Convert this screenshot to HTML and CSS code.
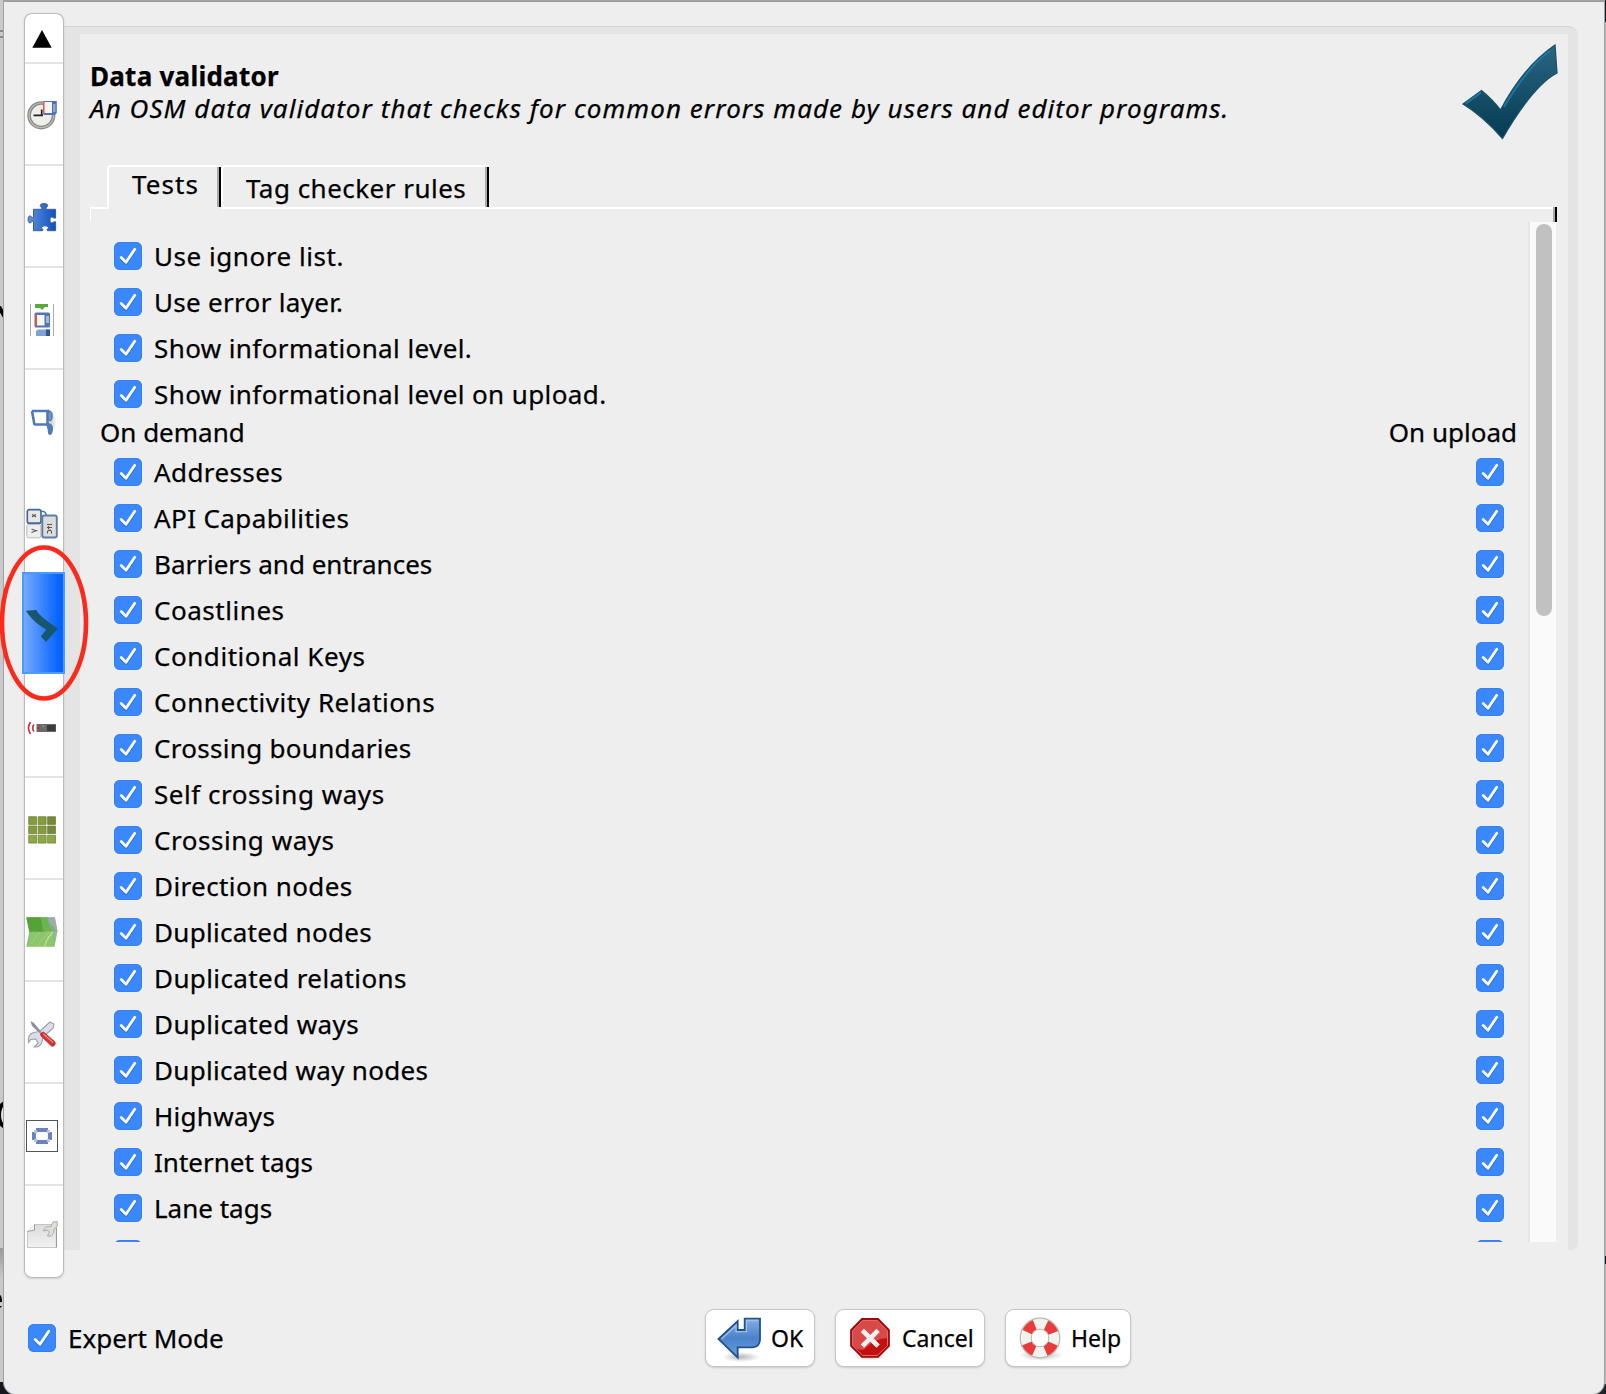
FILE: index.html
```html
<!DOCTYPE html>
<html lang="en">
<head>
<meta charset="utf-8">
<title>Preferences</title>
<link rel="stylesheet" href="styles.css">
</head>
<body>
<svg width="0" height="0" class="defs">
  <defs>
    <linearGradient id="bigcheck" x1="0" y1="0" x2="0" y2="1"><stop offset="0" stop-color="#2b6583"/><stop offset="1" stop-color="#043b52"/></linearGradient>
    <linearGradient id="blue" x1="0" y1="0" x2="1" y2="0"><stop offset="0" stop-color="#5c92de"/><stop offset="1" stop-color="#0e50bd"/></linearGradient>
    <linearGradient id="arrow" x1="0" y1="0" x2="0" y2="1"><stop offset="0" stop-color="#84aee0"/><stop offset=".5" stop-color="#4a83cb"/><stop offset="1" stop-color="#6c9fdb"/></linearGradient>
    <linearGradient id="paper" x1="0" y1="0" x2="0" y2="1"><stop offset="0" stop-color="#dcdcdc"/><stop offset="1" stop-color="#f1f1f1"/></linearGradient>
    <radialGradient id="shade"><stop offset="0" stop-color="#000" stop-opacity=".28"/><stop offset="1" stop-color="#000" stop-opacity="0"/></radialGradient>
    <symbol id="tick" viewBox="0 0 28 28"><path d="M7.2 15.9 12 20.6 20.8 7.6" fill="none" stroke="#1b62cc" stroke-opacity=".55" stroke-width="2.8" stroke-linecap="round" stroke-linejoin="round" transform="translate(0 1)"/><path d="M7.2 15.6 12 20.3 20.8 7.3" fill="none" stroke="#fff" stroke-width="2.8" stroke-linecap="round" stroke-linejoin="round"/></symbol>
  </defs>
</svg>
<div class="desktop">
  <div class="behind behind-left">
    <svg class="stroke" width="4" height="14" viewBox="0 0 4 14"><path d="M-2-1 6 13" stroke="#000" stroke-width="4"/></svg>
    <i class="rule r1"></i><i class="rule r2"></i><i class="lower"></i>
    <svg class="stroke curve" width="4" height="30" viewBox="0 0 4 30"><path d="M8 2.500Q-1 3-1 15T8 27" fill="#ddd" stroke="#000" stroke-width="4"/></svg>
    <svg class="stroke dots" width="3" height="16" viewBox="0 0 3 16"><path d="M0 1Q2 2 2 8H0zM0 12h2l-2 2z"/></svg>
  </div>
  <div class="behind behind-right"></div>
  <main class="window">
    <div class="upper">
      <nav class="sidebar">
        <div class="scroll-up"><svg width="20" height="18" viewBox="0 0 20 18"><path d="M10 0 19.7 17.7H.3z"/></svg></div>
        <div class="item"><svg viewBox="0 0 32 32"><circle cx="15.3" cy="15.3" r="12.3" fill="#eeeeea" stroke="#8a8a86" stroke-width="3.6"/><circle cx="15.3" cy="15.3" r="12.3" fill="none" stroke="#bcbcb8" stroke-width="1.2"/><path d="M7.5 15.3H17M15.7 9.5v6" stroke="#222" stroke-width="1.7"/><path d="M17.5 1h13.3v12l-2 2H17.5z" fill="#4b73ba"/><path d="M18 2h8v11h-8z" fill="#f6f6f8"/><path d="M17.8 2v12" stroke="#ef5a4a" stroke-width="1.6"/><path d="M27 4h2.5v8H27z" fill="#91a6cc"/></svg></div>
        <div class="item"><svg viewBox="0 0 32 32"><path d="M7.5 7.3h8.2c1-2-1.7-2.200-1.500-4 .2-2.300 7.300-2.300 7.500 0 .2 1.800-2.500 2-1.500 4h9.400v8.700c-2 .8-2.800-1.500-4.300-1-1.800.8-1.800 5 0 5.800 1.500.6 2.300-1.800 4.300-1v8.900h-8.200c-1.300-2 1.500-2 1-3.500-.8-1.800-6-1.800-6.800 0-.5 1.500 2.300 1.500 1 3.500H7.500v-9.300c-2-.6-2 1.700-3.700 1.500-2.300-.2-2.300-6.800 0-7 1.700-.2 1.700 2.200 3.700 1.500z" fill="url(#blue)" stroke="#3d5f96" stroke-width="1"/></svg></div>
        <div class="item"><svg viewBox="0 0 32 32"><path d="M4.500 0v32M27.500 0v32" stroke="#aaa"/><path d="M9 0h13v3h-3l-3 3-2-2H9z" fill="#58a83a"/><rect x="8.500" y="8.500" width="15.500" height="15" rx="1.500" fill="#5076b8"/><path d="M10.500 11h8v10.500h-8z" fill="#f7f7f9"/><path d="M10 10v12" stroke="#e6503c" stroke-width="2"/><path d="M20 12h3v7h-3z" fill="#aab6cb"/><path d="M10 32v-5l2-1.500h12V32z" fill="#7fa3d0"/><path d="M20 25.500h4V32h-4z" fill="#2f568f"/></svg></div>
        <div class="item plain"><svg viewBox="0 0 32 32"><ellipse cx="25" cy="16" rx="6" ry="12" fill="url(#shade)" opacity=".7"/><path d="M6 5h17.500M8.500 19 6 5M8.500 18.500H23M21.500 5v13" fill="none" stroke="#5079b8" stroke-width="2.600"/><ellipse cx="24" cy="10" rx="2.200" ry="4.800" fill="#6d93cc" stroke="#416ba9"/><path d="M20 17.500c4-1 7 1 7 4.500s-1 7-3 7c-2.500 0-2-4-2.500-6z" fill="#527cb8"/></svg></div>
        <div class="item plain"><svg viewBox="0 0 32 32"><rect x=".8" y="16.500" width="14" height="13.300" rx="2" fill="#eee" stroke="#bbb"/><path d="M5.500 21l4.500 1.700-4.500 1.800M10 22.700h1.500" stroke="#666" fill="none" stroke-width="1.200"/><path d="M15.500 3.500c3-.5 4.500 1 5 4" fill="none" stroke="#44699f" stroke-width="1.400"/><rect x="1.300" y="1.700" width="13.700" height="13.500" rx="2" fill="#e7e7e5" stroke="#44699f" stroke-width="1.700"/><path d="M6 6.500l2.500 1 1.500-1M6 9l2-1.500 2 1.500" stroke="#555" fill="none" stroke-width="1.100"/><rect x="16.300" y="7.500" width="14.500" height="22" rx="2" fill="#deded8" stroke="#5a7dad" stroke-width="1.900"/><path d="M21.500 25.500c-1-4.500 5-4.500 4 0M21 19.500h5M22.500 18v3M21 16.500h5" stroke="#555" fill="none" stroke-width="1.100"/></svg></div>
        <div class="item selected"><svg viewBox="0 0 32 32"><path d="M0 .8 10.500 0c2 5 9 10 21.500 18.500L20 32l-5-5.500 5.300-7C12 15 5 9 0 .8z" fill="#18556f"/></svg></div>
        <div class="item"><svg viewBox="0 0 32 32"><path d="M4.500 10q-4 6 0 12M8 12.500q-2.600 3.500 0 7" fill="none" stroke="#c53a3e" stroke-width="1.700"/><rect x="10.500" y="12" width="19.500" height="8" fill="#6a6a6a"/><path d="M21 13h8.500v6H21z" fill="#3c3c3c"/><path d="M11.500 15h2.500v2h-2.500z" fill="#b33"/><path d="M16.500 13.500h1.500v1.500h-1.500z" fill="#8a8"/><path d="M18 17h1.500v1.500H18z" fill="#66a"/></svg></div>
        <div class="item"><svg viewBox="0 0 32 32"><g fill="#839c3e" stroke="#6e8535" stroke-width=".8"><path d="M2.700 2.700h7.900v7.700H2.700zM12.200 2.700h7.900v7.700h-7.900zM2.700 12h7.900v7.700H2.700zM12.200 12h7.900v7.700h-7.900z"/><path fill="#76883a" d="M21.600 2.700h7.900v7.700h-7.900zM21.600 12h7.900v7.700h-7.900z"/><path fill="#90a748" d="M2.700 21.400h7.900v7.700H2.700zM12.200 21.400h7.900v7.700h-7.900zM21.600 21.400h7.900v7.700h-7.900z"/></g></svg></div>
        <div class="item"><svg viewBox="0 0 32 32"><path d="M.3 1.300h28.500l2.700 14-3 15.500H.3l3-15z" fill="#8bc56c"/><path d="M.3 1.300H15l4 14.500H3.300z" fill="#55a336"/><path d="M15 1.300h7c-1 5 6 8 8.700 14H17z" fill="#6db44c"/><path d="M23 1.300h5.800l2.700 14-2 3c1-7-6-9-6.500-17z" fill="#a5aaa8"/><path d="M22 1.500c0 8 7 10 6 22" fill="none" stroke="#86a9d3" stroke-width="1.300"/><path d="M19 30c1-7 5-10 8-14" fill="none" stroke="#bfdd8d" stroke-width="1.500"/><path d="M5 28c5-4 4-10 9-11M12 30c3-8 8-8 11-14" fill="none" stroke="#a3d184" stroke-width="1"/></svg></div>
        <div class="item"><svg viewBox="0 0 32 32"><path d="M24 4l4 2-.8 4-9 8c-2 1.500-2 3-2 5-.5 4-4 6.500-8 6l4-4-2.500-4-5 .5-2 3c-1.500-5 1-9 5-10 3-.5 5-.5 7-2z" fill="#dcdde8" stroke="#9c9dad" stroke-width="1.100"/><path d="M4.500 3l3.500 2 7.500 9-1.500 1.500L6 8z" fill="#8d929e"/><path d="M14.500 15.500l3-1.500 11 9.500c2 2.500-.5 5.500-3 4.500L15 18z" fill="#d93232" stroke="#b32325" stroke-width=".8"/><path d="M17.500 16 27 24.500" stroke="#f58b84" stroke-width="1.300"/></svg></div>
        <div class="item"><svg viewBox="0 0 32 32"><rect x=".5" y=".5" width="31" height="31" fill="#fff" stroke="#555"/><path d="M10 8h12v4H10zM10 20h12v4H10zM6 12h4v8H6zM22 12h4v8h-4z" fill="#6b83c4"/><path d="M8 10h3v3H8zM21 10h3v3h-3zM8 19h3v3H8zM21 19h3v3h-3z" fill="#b8c3e2"/></svg></div>
        <div class="item last"><svg viewBox="0 0 32 32"><path d="M8.500 2.500h21.800v23H1.500V9.500z" fill="url(#paper)" stroke="#c6c6c6"/><path d="M8.500 2.500v5.500L1.500 9.500" fill="#fafafa" stroke="#999"/><path d="M30.500 6v19.500" stroke="#999"/><path d="M31-.5l-4 .5-2.500 5c-3-1-6 0-7 4l4-1 2 2-2 4c4 1 7-2 6-6l4-4z" fill="#dededa" stroke="#a4a4a0" stroke-width=".9"/></svg></div>
      </nav>
      <section class="frame">
        <div class="page">
          <header class="heading">
            <div class="titles"><h1>Data validator</h1><p>An OSM data validator that checks for common errors made by users and editor programs.</p></div>
            <svg class="bigcheck" width="96" height="96" viewBox="0 0 96 96"><path d="M1 60 19.500 46.500Q31 56 38.500 66 62 22 93 1l2 28C76 39 57 66 40.500 94.500 27 79 14 68 1 60z" fill="url(#bigcheck)" stroke="#1b5169" stroke-width="1.300"/><path d="M4 59.500 19 48.500M42 63C58 36 72 18 88 7" fill="none" stroke="#1b7fae" stroke-width="1.800" opacity=".85"/></svg>
          </header>
          <div class="tabs"><div class="tab active">Tests</div><div class="tab">Tag checker rules</div><div class="tabfill"></div></div>
          <div class="pane">
            <div class="list">
              <div class="options">
                <label class="row"><svg class="box"><use href="#tick"/></svg><span class="x5">Use ignore list.</span></label>
                <label class="row"><svg class="box"><use href="#tick"/></svg><span class="x3">Use error layer.</span></label>
                <label class="row"><svg class="box"><use href="#tick"/></svg><span>Show informational level.</span></label>
                <label class="row"><svg class="box"><use href="#tick"/></svg><span>Show informational level on upload.</span></label>
              </div>
              <div class="columns"><span>On demand</span><span>On upload</span></div>
              <div class="tests">
                <div class="row"><svg class="box"><use href="#tick"/></svg><span>Addresses</span><svg class="box"><use href="#tick"/></svg></div>
                <div class="row"><svg class="box"><use href="#tick"/></svg><span>API Capabilities</span><svg class="box"><use href="#tick"/></svg></div>
                <div class="row"><svg class="box"><use href="#tick"/></svg><span class="x0">Barriers and entrances</span><svg class="box"><use href="#tick"/></svg></div>
                <div class="row"><svg class="box"><use href="#tick"/></svg><span class="x5">Coastlines</span><svg class="box"><use href="#tick"/></svg></div>
                <div class="row"><svg class="box"><use href="#tick"/></svg><span class="x5">Conditional Keys</span><svg class="box"><use href="#tick"/></svg></div>
                <div class="row"><svg class="box"><use href="#tick"/></svg><span class="x5">Connectivity Relations</span><svg class="box"><use href="#tick"/></svg></div>
                <div class="row"><svg class="box"><use href="#tick"/></svg><span class="x3">Crossing boundaries</span><svg class="box"><use href="#tick"/></svg></div>
                <div class="row"><svg class="box"><use href="#tick"/></svg><span class="x5">Self crossing ways</span><svg class="box"><use href="#tick"/></svg></div>
                <div class="row"><svg class="box"><use href="#tick"/></svg><span class="x5">Crossing ways</span><svg class="box"><use href="#tick"/></svg></div>
                <div class="row"><svg class="box"><use href="#tick"/></svg><span>Direction nodes</span><svg class="box"><use href="#tick"/></svg></div>
                <div class="row"><svg class="box"><use href="#tick"/></svg><span class="x3">Duplicated nodes</span><svg class="box"><use href="#tick"/></svg></div>
                <div class="row"><svg class="box"><use href="#tick"/></svg><span>Duplicated relations</span><svg class="box"><use href="#tick"/></svg></div>
                <div class="row"><svg class="box"><use href="#tick"/></svg><span>Duplicated ways</span><svg class="box"><use href="#tick"/></svg></div>
                <div class="row"><svg class="box"><use href="#tick"/></svg><span class="x3">Duplicated way nodes</span><svg class="box"><use href="#tick"/></svg></div>
                <div class="row"><svg class="box"><use href="#tick"/></svg><span class="x3">Highways</span><svg class="box"><use href="#tick"/></svg></div>
                <div class="row"><svg class="box"><use href="#tick"/></svg><span class="x0">Internet tags</span><svg class="box"><use href="#tick"/></svg></div>
                <div class="row"><svg class="box"><use href="#tick"/></svg><span class="x0">Lane tags</span><svg class="box"><use href="#tick"/></svg></div>
                <div class="row"><svg class="box"><use href="#tick"/></svg><span></span><svg class="box"><use href="#tick"/></svg></div>
              </div>
            </div>
            <div class="scrollbar"><div class="thumb"></div></div>
          </div>
        </div>
      </section>
    </div>
    <footer class="footer">
      <label class="expert"><svg class="box"><use href="#tick"/></svg><span>Expert Mode</span></label>
      <div class="buttons">
        <button class="btn ok"><svg width="44" height="46" viewBox="0 0 44 46"><ellipse cx="24" cy="40" rx="19" ry="5" fill="url(#shade)"/><path d="M1.500 22 20.700 4v9h7V1.700H43V23q-.5 7-7.500 7.300H20.700v10.400z" fill="url(#arrow)" stroke="#22508f" stroke-width="1.800"/><path d="M4.500 22 19 8.500v6.200h10.500V3.500h11.700" fill="none" stroke="#9cc0ea" stroke-width="1.300"/></svg><span>OK</span></button>
        <button class="btn cancel"><svg width="40" height="46" viewBox="0 0 40 46"><ellipse cx="20" cy="39.500" rx="17" ry="4" fill="url(#shade)"/><path d="M12 1.800h16L39 13v16L28 40H12L1 29V13z" fill="#c40f10" stroke="#970a0a" stroke-width="1.700"/><path d="M12.500 3.300h15L37.500 13.500V21Q25 21 14 32.500 8 34 2.500 28.500v-15z" fill="#d84a49"/><path d="M12.700 3.500h14.600L37.500 13.700v14.800L27.300 38.500H12.700L2.600 28.500V13.700z" fill="none" stroke="#e36868" stroke-width="1"/><path d="M14 15 26.500 27.500M26.500 15 14 27.500" stroke="#f4f0ef" stroke-width="4.600" stroke-linecap="square"/></svg><span>Cancel</span></button>
        <button class="btn help"><svg width="44" height="46" viewBox="0 0 44 46"><ellipse cx="22" cy="38" rx="22" ry="6" fill="url(#shade)"/><circle cx="21" cy="21" r="14.300" fill="none" stroke="#f2f2ee" stroke-width="11"/><circle cx="21" cy="21" r="14.300" fill="none" stroke="#ea3a39" stroke-width="10.500" stroke-dasharray="10.800 11.662" stroke-dashoffset="-5.831"/><circle cx="21" cy="21" r="19.800" fill="none" stroke="#b9bab0" stroke-width="1.200"/><circle cx="21" cy="21" r="8.800" fill="none" stroke="#b9bab0"/></svg><span>Help</span></button>
      </div>
    </footer>
  </main>
  <svg class="marker" width="90" height="158" viewBox="0 0 90 158"><ellipse cx="44" cy="79" rx="42" ry="75.500" fill="none" stroke="#fc2a1c" stroke-width="4.600"/></svg>
</div>
</body>
</html>
```
FILE: styles.css
```css
* { box-sizing: border-box; }
body { margin: 0; background: #c4c4c4; color: #000; font: 26px/32px "Noto Sans", "Open Sans", sans-serif; -webkit-text-stroke: .25px #000; }
.defs { position: absolute; }
.desktop { position: relative; width: 1606px; height: 1394px; padding: 1px 2px 0 4px; overflow: hidden; background: #b6b6b6; }
.behind { position: absolute; top: 0; bottom: 0; overflow: hidden; }
.behind-left { left: 0; width: 14px; background: #c9c9c9; }
.behind-right { right: 0; width: 14px; background: linear-gradient(#15181c 22px, #b9b9b9 22px 1256px, #101318 1256px 1264px, #b9b9b9 1264px 1384px, #202328 1384px); }
.stroke { position: absolute; left: 0; top: 306px; }
.curve { top: 1100px; }
.dots { top: 1294px; }
.rule { position: absolute; left: 0; width: 4px; height: 2px; background: #8b8b8b; }
.r1 { top: 30px; } .r2 { top: 36px; }
.lower { position: absolute; top: 1248px; left: 0; width: 14px; bottom: 0; background: linear-gradient(#999, #c8c8c8 30px, #c8c8c8 134px, #16181d 134px); }
.window { position: relative; height: 1393px; display: flex; flex-direction: column; background: #eee; border-top: 1px solid #9a9a9a; border-radius: 0 0 12px 12px; box-shadow: 0 0 0 1px #a2a2a2; }
.upper { display: flex; height: 1276px; padding: 12px 0 0 21px; }
.sidebar { position: relative; z-index: 1; width: 38px; height: 1263px; background: #fff; border-radius: 7px; box-shadow: 0 0 0 1px #bbb, 0 1px 2px 1px #ccc; }
.scroll-up { height: 50px; border-bottom: 2px solid #e3e3e3; padding: 16px 0 0 7px; line-height: 0; }
.item { height: 102px; padding: 36px 0 0 1px; border-bottom: 2px solid #e3e3e3; line-height: 0; }
.item svg { width: 32px; height: 32px; overflow: visible; }
.item.plain { border-color: transparent; }
.item.last { height: 90px; border: 0; }
.item.selected { width: 43px; margin: -2px 0 2px -3px; background: linear-gradient(90deg, #74a9ff, #0464ff 90%); border: 2px solid #4c9bfb; padding: 36px 0 0 2px; }
.frame { width: 1515px; height: 1224px; margin: 12px 0 0; padding: 7px 10px 0 17px; background: #e4e4e4; border-top: 1px solid #d6d6d6; border-radius: 0 10px 8px 0; }
.page { height: 1217px; background: #eee; padding: 0 0 0 10px; }
.heading { display: flex; justify-content: space-between; height: 131px; padding: 10px 10px 0 0; }
.titles { padding-top: 16px; }
h1 { margin: 0; font-size: 26px; line-height: 32px; font-weight: 700; white-space: pre; letter-spacing: .25px; }
p { margin: 0; font-style: italic; white-space: pre; letter-spacing: 1.06px; }
.tabs { display: flex; height: 44px; padding-left: 17px; position: relative; }
.tabs::before { content: ""; width: 17px; height: 2px; background: #fff; position: absolute; left: 0; bottom: 0; }
.tab { height: 44px; white-space: pre; border: solid #fff; border-width: 2px 0 2px 2px; border-radius: 4px 0 0 0; width: 268px; padding: 5px 0 0 23px; position: relative; letter-spacing: .48px; }
.tab.active { width: 114px; border-bottom: 0; padding-top: 1px; letter-spacing: 1.1px; }
.tab::after { content: ""; position: absolute; right: 0; top: 0; width: 4px; height: 40px; background: linear-gradient(90deg, #aaa 2px, #000 2px); }
.tabfill { flex: 1; margin-right: 12px; border-bottom: 2px solid #fff; }
.pane { display: flex; height: 1033px; margin-right: 12px; border-left: 1px solid #fff; border-image: linear-gradient(#fff 13px, transparent 13px) 1; position: relative; }
.pane::after { content: ""; position: absolute; right: -1px; top: -2px; width: 4px; height: 15px; background: linear-gradient(90deg, #aaa 2px, #000 2px); }
.list { flex: 1; padding-top: 24px; overflow: hidden; }
.options, .tests { padding-left: 23px; }
.row { display: flex; align-items: center; height: 46px; letter-spacing: .4px; }
.row span { flex: 1; white-space: pre; }
.x0 { letter-spacing: 0; }
.x3 { letter-spacing: .3px; }
.x5 { letter-spacing: .54px; }
.row .box:last-child { margin-right: 24px; }
.box { width: 28px; height: 28px; flex: none; margin-right: 12px; border-radius: 6px; background: #3b87fd; box-shadow: inset 0 0 0 1px #3580f6; }
.columns { display: flex; justify-content: space-between; height: 32px; margin-top: -1px; margin-bottom: 1px; padding: 0 11px 0 9px; white-space: pre; }
.scrollbar { width: 28px; height: 1020px; margin-top: 13px; padding: 2px 0 0 6px; background: #fafafa; border-left: 2px solid #e7e7e7; }
.thumb { width: 16px; height: 392px; border-radius: 8px; background: #c1c1c1; }
.footer { display: flex; padding: 31px 0 0 24px; }
.expert { display: flex; width: 678px; height: 58px; align-items: center; white-space: pre; }
.buttons { display: flex; gap: 22px; padding-top: 1px; }
.btn { display: flex; align-items: center; height: 56px; padding: 0; border: 0; border-radius: 8px; background: #fff; box-shadow: 0 0 0 1px #c6c6c6, 0 1px 2px 1px #c8c8c8; font: 23px/30px "Noto Sans", sans-serif; color: #000; white-space: pre; }
.btn svg { flex: none; margin-top: 4px; }
.ok { width: 108px; padding-left: 11px; } .ok span { margin-left: 10px; }
.cancel { width: 148px; padding-left: 14px; } .cancel span { margin-left: 12px; }
.help { width: 124px; padding-left: 13px; } .help span { margin-left: 8px; }
.marker { position: absolute; left: 0; top: 544px; z-index: 3; }
```
